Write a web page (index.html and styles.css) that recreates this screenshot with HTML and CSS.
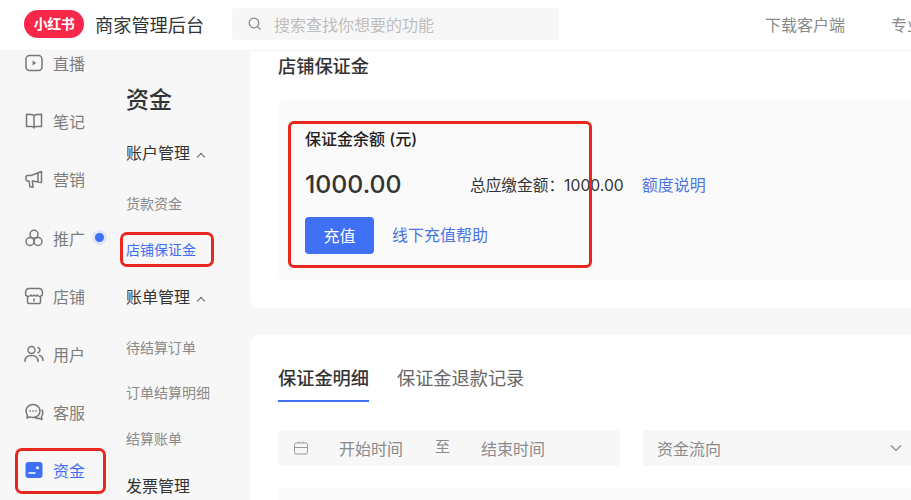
FILE: index.html
```html
<!DOCTYPE html>
<html lang="zh-CN">
<head>
    <meta charset="UTF-8">
    <meta name="viewport" content="width=device-width, initial-scale=1.0">
    <title>商家管理后台</title>
    <link rel="stylesheet" href="styles.css">
</head>
<body>
    <div class="header">
        <div class="logo">小红书</div>
        <div class="app-name">商家管理后台</div>
        <div class="search">
            <svg class="search-icon" width="14" height="14" viewBox="0 0 14 14"><circle cx="6" cy="6" r="4.8"/><path d="M9.6 9.6l3 3"/></svg>
            <span>搜索查找你想要的功能</span>
        </div>
        <div class="header-links">
            <span>下载客户端</span>
            <span>专业号</span>
        </div>
    </div>

    <div class="layout">
        <ul class="rail">
            <li>
                <svg width="20" height="20" viewBox="0 0 20 20"><rect x="2" y="2.5" width="16" height="15" rx="3.5"/><path class="solid" d="M8.6 7.6l3.6 2.4-3.6 2.4z"/></svg>
                直播
            </li>
            <li>
                <svg width="20" height="20" viewBox="0 0 20 20"><path d="M10 4.500C8.500 3.500 7 3.200 2.500 3.200v12.300h5.200c1 0 2.300.4 2.300 1.500 0-1.100 1.300-1.500 2.300-1.500h5.200V3.200C13 3.200 11.500 3.500 10 4.500zM10 4.500v12"/></svg>
                笔记
            </li>
            <li>
                <svg width="20" height="20" viewBox="0 0 20 20"><path d="M17.500 2.500L7 6.500H3.500C2.500 6.500 2 7 2 8v2.500c0 1 .5 1.500 1.500 1.500H5l1 6h3.200l-1-6 9.300 1.500zM14 4v9"/></svg>
                营销
            </li>
            <li>
                <svg width="20" height="20" viewBox="0 0 20 20"><circle cx="10" cy="6.300" r="4"/><circle cx="6" cy="13.500" r="4"/><circle cx="14" cy="13.500" r="4"/></svg>
                推广
                <span class="dot"></span>
            </li>
            <li>
                <svg width="20" height="20" viewBox="0 0 20 20"><path d="M5 2.500h10c2 0 3.500 2 3.500 5 0 1.500-.8 2.500-2 2.800V16c0 1-.7 1.500-1.500 1.500H5c-.8 0-1.500-.5-1.500-1.500v-5.700c-1.200-.3-2-1.300-2-2.800 0-3 1.500-5 3.500-5zM3.500 10.300c1.500.3 2.500 0 3.200-1.300.8 1.300 2 1.500 3.300 0 1.300 1.500 2.500 1.300 3.300 0 .7 1.300 1.700 1.600 3.200 1.300M10 13v2"/></svg>
                店铺
            </li>
            <li>
                <svg width="20" height="20" viewBox="0 0 20 20"><circle cx="7.500" cy="6" r="3.500"/><path d="M1 17.500c0-4 2.800-6 6.500-6s6.500 2 6.500 6M14 3.500a2.700 2.700 0 010 5.200M15.500 11.500c2 .5 3.500 2.500 3.500 5"/></svg>
                用户
            </li>
            <li>
                <svg width="20" height="20" viewBox="0 0 20 20"><path d="M9 2.500c-4 0-7 2.800-7 6.500 0 1.500.5 2.800 1.300 3.800L3 16l3-1.200c1 .5 2 .7 3 .7 4 0 7-2.800 7-6.500s-3-6.500-7-6.500zM18 8c1 1.500 1 5-.5 6.500l.5 3-3-1.300c-1.500.5-3 0-4-.8"/><path class="solid" d="M5.400 8.200h1.500v1.500H5.400zM8.300 8.200h1.500v1.500H8.300zM11.200 8.200h1.500v1.500h-1.500z"/></svg>
                客服
            </li>
            <li class="rail-active marked">
                <svg width="20" height="20" viewBox="0 0 20 20"><rect class="fill-blue" x="1.500" y="2" width="17" height="16" rx="3"/><path class="white" d="M5 13h6"/><circle class="dot-white" cx="13.500" cy="7.800" r="1.500"/></svg>
                资金
            </li>
        </ul>

        <div class="subnav">
            <h2>资金</h2>
            <div class="group-title">账户管理 <span class="caret"></span></div>
            <div class="sub-item">货款资金</div>
            <div class="sub-item sub-active marked">店铺保证金</div>
            <div class="group-title">账单管理 <span class="caret"></span></div>
            <div class="sub-item">待结算订单</div>
            <div class="sub-item">订单结算明细</div>
            <div class="sub-item">结算账单</div>
            <div class="group-title">发票管理</div>
        </div>

        <div class="main-content">
            <div class="card card-top">
                <h3>店铺保证金</h3>
                <div class="balance-panel">
                    <div class="balance-label">保证金余额 (元)</div>
                    <div class="balance-row">
                        <span class="amount">1000.00</span>
                        <span class="total">总应缴金额：1000.00</span>
                        <span class="link">额度说明</span>
                    </div>
                    <div class="balance-actions">
                        <button class="btn-primary">充值</button>
                        <span class="link">线下充值帮助</span>
                    </div>
                    <div class="red-box"></div>
                </div>
            </div>

            <div class="card card-bottom">
                <div class="tabs">
                    <div class="tab tab-active">保证金明细</div>
                    <div class="tab">保证金退款记录</div>
                </div>
                <div class="filters">
                    <div class="date-range">
                        <svg class="calendar" width="16" height="16" viewBox="0 0 16 16"><rect x="1.500" y="3" width="13" height="11" rx="1.500"/><path d="M1.500 7.500h13M6 1.500V3M10 1.500V3"/></svg>
                        <span class="date-start">开始时间</span>
                        <span class="date-to">至</span>
                        <span>结束时间</span>
                    </div>
                    <div class="select">
                        <span>资金流向</span>
                        <svg class="chevron" width="12" height="8" viewBox="0 0 12 8"><path d="M1 1.500l5 5 5-5"/></svg>
                    </div>
                </div>
                <div class="table-head"></div>
            </div>
        </div>
    </div>
</body>
</html>
```

FILE: styles.css
```css
*, *::after {
    box-sizing: border-box;
}
html, body {
    height: 100%;
}
body {
    font-family: Inter, "Noto Sans CJK SC", sans-serif;
    margin: 0;
    padding: 0;
    height: 500px;
    overflow: hidden;
    background-color: #f7f7f7;
    color: #333;
}
ul {
    list-style: none;
    padding: 0;
    margin: 0;
}
h2, h3 {
    margin: 0;
}

/* header */
.header {
    height: 51px;
    background-color: #fff;
    border-bottom: 1px solid #f2f2f2;
    display: flex;
    align-items: center;
    padding: 0 0 3px 24px;
    overflow: hidden;
    white-space: nowrap;
}
.logo {
    width: 60px;
    height: 28px;
    flex: none;
    border-radius: 14px;
    background-color: #f9284a;
    color: #fff;
    font-size: 14px;
    font-weight: 700;
    letter-spacing: -0.5px;
    line-height: 28px;
    text-align: center;
}
.app-name {
    margin-left: 11px;
    width: 109px;
    flex: none;
    font-size: 18.200px;
    color: #333;
}
.search {
    margin-left: 28px;
    width: 327px;
    height: 32px;
    flex: none;
    background-color: #f7f7f7;
    border-radius: 4px;
    display: flex;
    align-items: center;
    padding-left: 16px;
    font-size: 16px;
    color: #bdbdbd;
}
.search-icon {
    margin-right: 12px;
    fill: none;
    stroke: #888;
    stroke-width: 1.300;
}
.header-links {
    margin-left: 206px;
    display: flex;
    gap: 46px;
    font-size: 16px;
    color: #8a8a8a;
}

/* columns */
.layout {
    display: flex;
    height: 449px;
    overflow: hidden;
}
.rail {
    width: 110px;
    flex: none;
    margin-top: -17px;
    border-right: 1px solid #f2f2f2;
}
.rail li {
    position: relative;
    height: 58.200px;
    display: flex;
    align-items: center;
    gap: 9px;
    padding-left: 24px;
    font-size: 16px;
    color: #7d7d7d;
}
.rail svg {
    flex: none;
    fill: none;
    stroke: #777;
    stroke-width: 1.500;
    stroke-linejoin: round;
    stroke-linecap: round;
}
.rail svg .solid {
    fill: #777;
    stroke: none;
}
.rail svg .fill-blue {
    fill: #3f6ff2;
    stroke: none;
}
.rail svg .white {
    stroke: #fff;
}
.rail svg .dot-white {
    fill: #fff;
    stroke: none;
}
.rail li.rail-active {
    color: #3f6ff2;
}
.dot {
    width: 9px;
    height: 9px;
    margin-left: 1px;
    border-radius: 50%;
    background-color: #3f6ff2;
    box-shadow: 0 0 0 3px #dfe6fb;
}
.marked::after {
    content: "";
    position: absolute;
    border: 3px solid #e8281f;
    border-radius: 7px;
}
.rail-active::after {
    top: 7px;
    left: 15px;
    width: 91px;
    height: 46px;
}

.subnav {
    width: 140px;
    flex: none;
    padding: 33px 0 0 16px;
    white-space: nowrap;
}
.subnav h2 {
    font-size: 23px;
    font-weight: 500;
    line-height: 32px;
    height: 45px;
    color: #333;
}
.group-title {
    height: 46px;
    margin: 1px 0 5px;
    font-size: 16px;
    line-height: 46px;
    color: #333;
}
.caret {
    display: inline-block;
    width: 6px;
    height: 6px;
    margin: 0 0 0 3px;
    border-left: 1px solid #666;
    border-top: 1px solid #666;
    transform: translateY(1px) rotate(45deg);
}
.sub-item {
    position: relative;
    height: 45.800px;
    font-size: 14px;
    line-height: 46px;
    color: #8a8a8a;
}
.sub-active {
    color: #3f6ff2;
}
.sub-active::after {
    top: 5px;
    left: -6px;
    width: 94px;
    height: 35px;
}

/* main */
.main-content {
    flex: 1;
    min-width: 0;
    display: flex;
    flex-direction: column;
    gap: 27px;
}
.card {
    background-color: #fff;
    padding-left: 28px;
    overflow: hidden;
}
.card-top {
    height: 257px;
    flex: none;
    border-radius: 0 0 0 10px;
    padding-top: 2px;
}
.card-top h3 {
    font-size: 18.200px;
    font-weight: 500;
    line-height: 26px;
    color: #333;
}
.balance-panel {
    position: relative;
    margin-top: 21px;
    width: 700px;
    height: 180px;
    padding: 28px 0 0 27px;
    background-color: #fafafa;
    border-radius: 8px;
}
.balance-label {
    font-size: 16px;
    font-weight: 500;
    line-height: 22px;
    color: #222;
}
.balance-row {
    display: flex;
    align-items: center;
    margin-top: 12px;
    height: 44px;
}
.amount {
    width: 165px;
    font-size: 24.800px;
    font-weight: 500;
    color: #333;
}
.total {
    font-size: 15.700px;
    color: #333;
}
.link {
    color: #4b74e2;
    font-size: 16px;
}
.balance-row .link {
    margin-left: 18px;
}
.balance-actions {
    display: flex;
    align-items: center;
    gap: 18px;
    margin-top: 11px;
}
.balance-actions .link {
    margin-bottom: 3px;
}
.btn-primary {
    width: 69px;
    height: 37px;
    padding: 0 0 2px;
    border: none;
    border-radius: 4px;
    background-color: #4070f4;
    color: #fff;
    font-family: inherit;
    font-size: 16px;
}
.red-box {
    position: absolute;
    top: 21px;
    left: 10px;
    width: 304px;
    height: 147px;
    border: 3px solid #e8281f;
    border-radius: 6px;
}

.card-bottom {
    flex: 1;
    border-radius: 10px 0 0 0;
}
.tabs {
    display: flex;
    gap: 28px;
    margin-top: 27px;
}
.tab {
    height: 40px;
    font-size: 18.200px;
    line-height: 32px;
    color: #666;
}
.tab-active {
    color: #333;
    font-weight: 500;
    border-bottom: 2px solid #4070f4;
}
.filters {
    display: flex;
    gap: 23px;
    margin-top: 28px;
}
.date-range, .select {
    height: 36px;
    flex: none;
    display: flex;
    align-items: center;
    padding-bottom: 1px;
    background-color: #f7f7f7;
    border-radius: 4px;
    font-size: 16px;
    color: #8a8a8a;
}
.date-range {
    width: 342px;
    padding-left: 15px;
}
.calendar {
    fill: none;
    stroke: #999;
    stroke-width: 1;
}
.date-start {
    margin-left: 30px;
}
.date-to {
    margin: 0 31px 4px 32px;
    font-size: 15px;
}
.select {
    width: 342px;
    padding-left: 14px;
}
.chevron {
    margin-left: 169px;
    fill: none;
    stroke: #888;
    stroke-width: 1.200;
}
.table-head {
    margin-top: 22px;
    width: 700px;
    height: 40px;
    background-color: #fafafa;
    border-radius: 6px 0 0 0;
}
```
